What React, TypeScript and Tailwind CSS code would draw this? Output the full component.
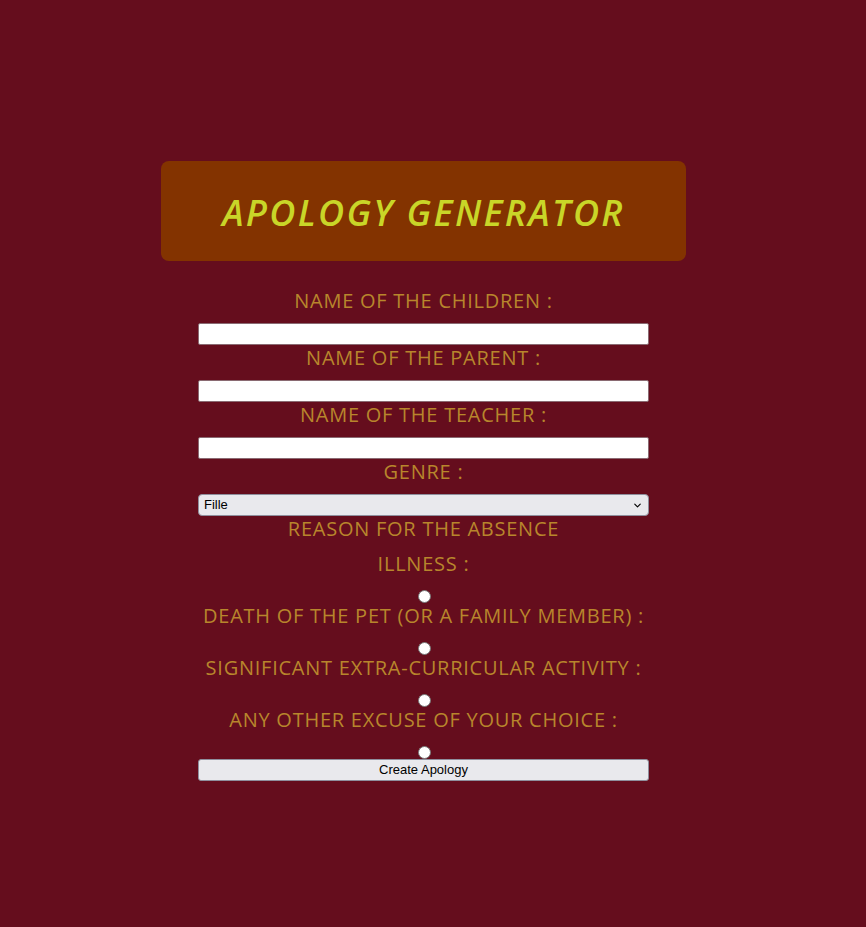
import { ChevronDown } from "lucide-react";

const labelCls =
  "h-[26px] leading-[26px] text-center text-[20px] tracking-[0.75px] text-[#b8862c] whitespace-nowrap";

const Field = ({ label }: { label: string }) => (
  <>
    <label className={`${labelCls} mb-[9px]`}>{label}</label>
    <input
      type="text"
      className="block h-[22px] w-full bg-white border border-[#8a6a72] rounded-[2px]"
    />
  </>
);

const Reason = ({ label }: { label: string }) => (
  <>
    <label className={labelCls}>{label}</label>
    <input
      type="radio"
      name="reason"
      className="block mt-[13px] ml-[2px] h-[13px] w-[13px] self-center appearance-none rounded-full bg-white border border-[#767676]"
    />
  </>
);

const App = () => {
  return (
    <main className="min-h-[927px] bg-[#650d1d] font-['Open_Sans','Noto_Sans',sans-serif]">
      <div className="w-[847px] flex flex-col items-center pt-[161px]">
        <header className="w-[525px] h-[100px] rounded-[8px] bg-[#833300] flex items-center justify-center">
          <h1 className="text-[36px] italic font-semibold tracking-[2.3px] text-[#c9d628] mt-[3px]">
            APOLOGY GENERATOR
          </h1>
        </header>

        <form className="w-[451px] flex flex-col mt-[27px]">
          <Field label="NAME OF THE CHILDREN :" />
          <Field label="NAME OF THE PARENT :" />
          <Field label="NAME OF THE TEACHER :" />

          <label className={`${labelCls} mb-[9px]`}>GENRE :</label>
          <div className="relative h-[22px]">
            <select className="block h-[22px] w-full appearance-none bg-[#e9e9ed] border border-[#8f8f9d] rounded-[4px] pl-[5px] text-[13px] text-black font-['Liberation_Sans',Arial,sans-serif]">
              <option>Fille</option>
              <option>Garçon</option>
            </select>
            <ChevronDown
              className="absolute right-[6px] top-[6px] pointer-events-none text-black"
              size={11}
              strokeWidth={2.5}
            />
          </div>

          <label className={`${labelCls} mb-[9px]`}>REASON FOR THE ABSENCE</label>
          <Reason label="ILLNESS :" />
          <Reason label="DEATH OF THE PET (OR A FAMILY MEMBER) :" />
          <Reason label="SIGNIFICANT EXTRA-CURRICULAR ACTIVITY :" />
          <Reason label="ANY OTHER EXCUSE OF YOUR CHOICE :" />

          <button
            type="button"
            className="block h-[22px] w-full bg-[#e9e9ed] border border-[#8f8f9d] rounded-[3px] text-[13px] text-black font-['Liberation_Sans',Arial,sans-serif]"
          >
            Create Apology
          </button>
        </form>
      </div>
    </main>
  );
};

export default App;
